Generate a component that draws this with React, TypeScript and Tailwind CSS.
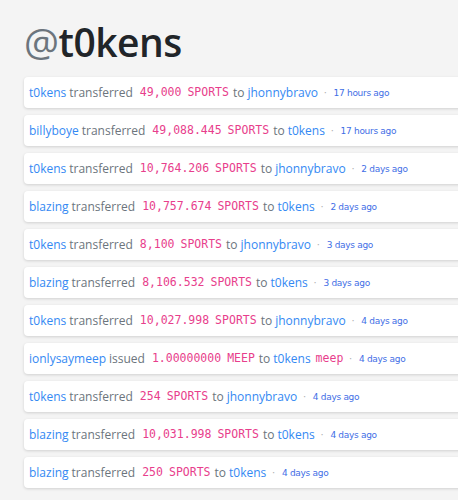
import React from "react";

type Tx = {
  from: string;
  verb: string;
  amount: string;
  symbol: string;
  to: string;
  memo?: string;
  time: string;
};

const txs: Tx[] = [
  { from: "t0kens", verb: "transferred", amount: "49,000", symbol: "SPORTS", to: "jhonnybravo", time: "17 hours ago" },
  { from: "billyboye", verb: "transferred", amount: "49,088.445", symbol: "SPORTS", to: "t0kens", time: "17 hours ago" },
  { from: "t0kens", verb: "transferred", amount: "10,764.206", symbol: "SPORTS", to: "jhonnybravo", time: "2 days ago" },
  { from: "blazing", verb: "transferred", amount: "10,757.674", symbol: "SPORTS", to: "t0kens", time: "2 days ago" },
  { from: "t0kens", verb: "transferred", amount: "8,100", symbol: "SPORTS", to: "jhonnybravo", time: "3 days ago" },
  { from: "blazing", verb: "transferred", amount: "8,106.532", symbol: "SPORTS", to: "t0kens", time: "3 days ago" },
  { from: "t0kens", verb: "transferred", amount: "10,027.998", symbol: "SPORTS", to: "jhonnybravo", time: "4 days ago" },
  { from: "ionlysaymeep", verb: "issued", amount: "1.00000000", symbol: "MEEP", to: "t0kens", memo: "meep", time: "4 days ago" },
  { from: "t0kens", verb: "transferred", amount: "254", symbol: "SPORTS", to: "jhonnybravo", time: "4 days ago" },
  { from: "blazing", verb: "transferred", amount: "10,031.998", symbol: "SPORTS", to: "t0kens", time: "4 days ago" },
  { from: "blazing", verb: "transferred", amount: "250", symbol: "SPORTS", to: "t0kens", time: "4 days ago" },
];

const mono = "font-['DejaVu_Sans_Mono',monospace] text-[11.5px] text-[#e83e8c]";

function Row({ tx }: { tx: Tx }) {
  return (
    <div className="h-[31px] flex items-center px-[5px] bg-white rounded-l-[4px] shadow-[0_1px_3px_rgba(0,0,0,0.15)] whitespace-nowrap text-[12px] text-[#6c757d]">
      <span className="text-[#3489f3]">{tx.from}</span>
      <span className="ml-[3px]">{tx.verb}</span>
      <span className={`${mono} ml-[7px]`}>{tx.amount}</span>
      <span className={`${mono} ml-[6px]`}>{tx.symbol}</span>
      <span className="ml-[4px]">to</span>
      <span className="ml-[3px] text-[#3489f3]">{tx.to}</span>
      {tx.memo && <span className={`${mono} ml-[5px]`}>{tx.memo}</span>}
      <span className="ml-[6px] text-[10px] text-[#b0b0b0]">·</span>
      <span className="ml-[7px] text-[9px] text-[#3f6ee6] pt-[2px] font-['DejaVu_Sans',sans-serif] tracking-[-0.3px]">{tx.time}</span>
    </div>
  );
}

export default function App() {
  return (
    <div className="w-[458px] h-[500px] overflow-hidden bg-[#f4f4f4] font-['Open_Sans',sans-serif]">
      <h1 className="pl-[24px] pt-[16px] pb-[9px] text-[39px] leading-[52px] font-semibold text-[#212529] tracking-[-0.5px]">
        <span className="font-normal text-[#6c757d]">@</span>t0kens
      </h1>
      <div className="pl-[24px] mr-[-20px] flex flex-col gap-[7px]">
        {txs.map((tx, i) => (
          <Row key={i} tx={tx} />
        ))}
      </div>
    </div>
  );
}
